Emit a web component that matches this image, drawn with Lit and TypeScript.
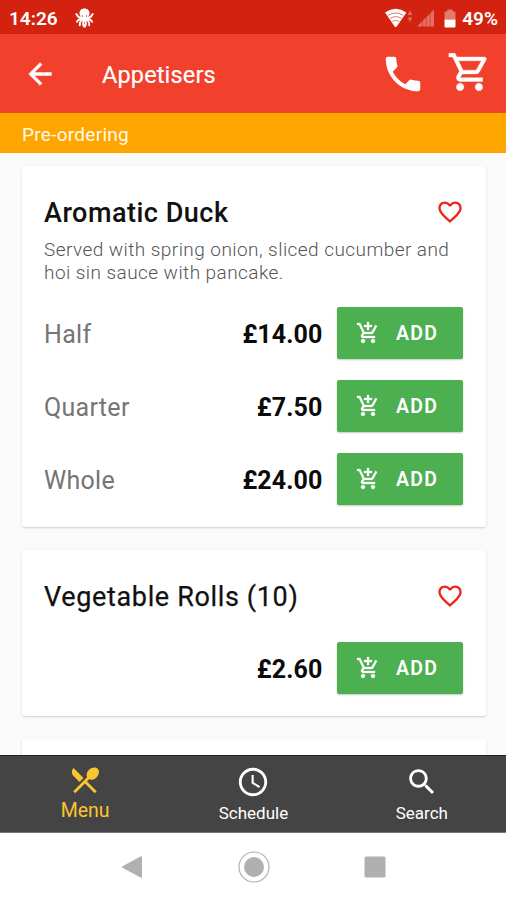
import { LitElement, html, css, svg } from "lit";
import { customElement, property } from "lit/decorators.js";

const paths: Record<string, string> = {
  back: "M20 11H7.83l5.59-5.59L12 4l-8 8 8 8 1.41-1.41L7.83 13H20v-2z",
  phone:
    "M6.62 10.79c1.44 2.83 3.76 5.14 6.59 6.59l2.2-2.2c.27-.27.67-.36 1.02-.24 1.12.37 2.33.57 3.57.57.55 0 1 .45 1 1V20c0 .55-.45 1-1 1-9.39 0-17-7.61-17-17 0-.55.45-1 1-1h3.5c.55 0 1 .45 1 1 0 1.25.2 2.45.57 3.57.11.35.03.74-.25 1.02l-2.2 2.2z",
  cart: "M15.55 13c.75 0 1.41-.41 1.75-1.03l3.58-6.49c.37-.66-.11-1.48-.87-1.48H5.21l-.94-2H1v2h2l3.6 7.59-1.35 2.44C4.52 15.37 5.48 17 7 17h12v-2H7l1.1-2h7.45zM6.16 6h12.15l-2.76 5H8.53L6.16 6zM7 18c-1.1 0-1.99.9-1.99 2S5.9 22 7 22s2-.9 2-2-.9-2-2-2zm10 0c-1.1 0-1.99.9-1.99 2s.89 2 1.99 2 2-.9 2-2-.9-2-2-2z",
  addCart:
    "M11 9h2V6h3V4h-3V1h-2v3H8v2h3v3zm-4 9c-1.1 0-1.99.9-1.99 2S5.9 22 7 22s2-.9 2-2-.9-2-2-2zm10 0c-1.1 0-1.99.9-1.99 2s.89 2 1.99 2 2-.9 2-2-.9-2-2-2zm-9.83-3.25l.03-.12.9-1.63h7.45c.75 0 1.41-.41 1.75-1.03l3.86-7.01L19.42 4h-.01l-1.1 2-2.76 5H8.53l-.13-.27L6.16 6l-.95-2-.94-2H1v2h2l3.6 7.59-1.35 2.45c-.16.28-.25.61-.25.96 0 1.1.9 2 2 2h12v-2H7.42c-.13 0-.25-.11-.25-.25z",
  heart:
    "M16.5 3c-1.74 0-3.41.81-4.5 2.09C10.91 3.81 9.24 3 7.5 3 4.42 3 2 5.42 2 8.5c0 3.78 3.4 6.86 8.55 11.54L12 21.35l1.45-1.32C18.6 15.36 22 12.28 22 8.5 22 5.42 19.58 3 16.5 3zm-4.4 15.55l-.1.1-.1-.1C7.14 14.24 4 11.39 4 8.5 4 6.5 5.5 5 7.5 5c1.54 0 3.04.99 3.57 2.36h1.87C13.46 5.99 14.96 5 16.5 5c2 0 3.5 1.5 3.5 3.5 0 2.89-3.14 5.74-7.9 10.05z",
  menu: "M8.1 13.34l2.83-2.83L3.91 3.5c-1.56 1.56-1.56 4.09 0 5.66l4.19 4.18zm6.78-1.81c1.53.71 3.68.21 5.27-1.38 1.91-1.91 2.28-4.65.81-6.12-1.46-1.46-4.2-1.1-6.12.81-1.59 1.59-2.09 3.74-1.38 5.27L3.7 19.87l1.41 1.41L12 14.41l6.88 6.88 1.41-1.41L13.41 13l1.47-1.47z",
  schedule:
    "M11.99 2C6.47 2 2 6.48 2 12s4.47 10 9.99 10C17.52 22 22 17.52 22 12S17.52 2 11.99 2zM12 20c-4.42 0-8-3.58-8-8s3.58-8 8-8 8 3.58 8 8-3.58 8-8 8zm.5-13H11v6l5.25 3.15.75-1.23-4.5-2.67z",
  search:
    "M15.5 14h-.79l-.28-.27C15.41 12.59 16 11.11 16 9.5 16 5.91 13.09 3 9.5 3S3 5.91 3 9.5 5.91 16 9.5 16c1.61 0 3.09-.59 4.23-1.57l.27.28v.79l5 4.99L20.49 19l-4.99-5zm-6 0C7.01 14 5 11.99 5 9.5S7.01 5 9.5 5 14 7.01 14 9.5 11.99 14 9.5 14z",
};

@customElement("md-icon")
export class MdIcon extends LitElement {
  @property() name = "";
  static styles = css`
    :host { display: block; flex: none; width: 24px; height: 24px; }
    svg { display: block; width: 100%; height: 100%; fill: currentColor; stroke: currentColor; stroke-width: var(--icon-weight, 0); }
  `;
  render() {
    return html`<svg viewBox="0 0 24 24">${svg`<path d=${paths[this.name] ?? ""}></path>`}</svg>`;
  }
}

interface Option { label: string; price: string; }
interface Dish { name: string; description?: string; options: Option[]; medium?: boolean; }

@customElement("dish-card")
export class DishCard extends LitElement {
  @property({ attribute: false }) dish!: Dish;
  static styles = css`
    :host {
      display: block; box-sizing: border-box; flex: none;
      background: #fff; border-radius: 3px;
      box-shadow: 0 1px 2px rgba(0, 0, 0, 0.17);
      padding: 28px 23px 22px 22px;
    }
    .head { display: flex; justify-content: space-between; height: 36px; align-items: center; }
    .title { font-size: 27px; font-weight: 400; letter-spacing: 0.65px; color: #111; white-space: nowrap; padding-top: 2px; -webkit-text-stroke: 0.25px #111; }
    .title.medium { font-weight: 500; letter-spacing: 0.5px; -webkit-text-stroke: 0; }
    .heart { width: 28px; height: 28px; color: #ee2416; margin-right: -1px; }
    .desc { margin: 8px 0 0; height: 46px; font-size: 19px; line-height: 23px; font-weight: 300; letter-spacing: 0.44px; color: #555; white-space: pre; }
    .rows { display: flex; flex-direction: column; gap: 21px; margin-top: 23px; }
    .rows.only { margin-top: 28px; }
    .row { display: flex; align-items: center; height: 52px; }
    .label { flex: 1; font-size: 25px; letter-spacing: 0.3px; color: #757575; padding-top: 3px; }
    .price { font-size: 25px; font-weight: 700; letter-spacing: 0.1px; color: #0b0b0b; padding-top: 3px; margin-right: 14.5px; }
    .add {
      display: flex; align-items: center; box-sizing: border-box; width: 126px; height: 52px; padding: 0 0 0 19px;
      border: 0; border-radius: 2px; background: #4caf50; color: #fff;
      box-shadow: 0 1px 2px rgba(0, 0, 0, 0.22);
      font: 600 19.5px Roboto, sans-serif; letter-spacing: 1.3px;
    }
    .add md-icon { margin: -1px 16px 0 0; --icon-weight: 0.3; }
    .add span { padding-top: 1px; }
  `;
  render() {
    const d = this.dish;
    return html`
      <div class="head">
        <div class="title ${d.medium ? "medium" : ""}">${d.name}</div>
        <md-icon class="heart" name="heart"></md-icon>
      </div>
      ${d.description ? html`<p class="desc">${d.description}</p>` : ""}
      <div class="rows ${d.description ? "" : "only"}">
        ${d.options.map(
          (o) => html`<div class="row">
            <div class="label">${o.label}</div>
            <div class="price">${o.price}</div>
            <button class="add"><md-icon name="addCart"></md-icon><span>ADD</span></button>
          </div>`
        )}
      </div>
    `;
  }
}

const dishes: Dish[] = [
  {
    name: "Aromatic Duck",
    medium: true,
    description: "Served with spring onion, sliced cucumber and\nhoi sin sauce with pancake.",
    options: [
      { label: "Half", price: "£14.00" },
      { label: "Quarter", price: "£7.50" },
      { label: "Whole", price: "£24.00" },
    ],
  },
  { name: "Vegetable Rolls (10)", options: [{ label: "", price: "£2.60" }] },
];

@customElement("app-root")
export class AppRoot extends LitElement {
  static styles = css`
    :host { display: flex; flex-direction: column; height: 900px; overflow: hidden; background: #fafafa; font-family: Roboto, sans-serif; }
    .status { flex: none; display: flex; align-items: center; height: 34px; box-sizing: border-box; padding: 2px 8px 0 9px; background: #d32210; color: #fff; font-size: 19px; font-weight: 600; }
    .octopus { width: 19px; height: 20px; margin-left: 17px; }
    .grow { flex: 1; }
    .wifi { width: 29px; height: 20px; }
    .signal { width: 18px; height: 18px; margin-left: 3px; }
    .battery { width: 12px; height: 19px; margin: 0 6px 0 9px; }
    .bar { flex: none; display: flex; align-items: center; height: 79px; box-sizing: border-box; padding: 0 14px 0 23px; background: #f1402c; color: #fff; border-bottom: 1px solid #e8491a; }
    .back { width: 34px; height: 34px; margin-top: 1px; --icon-weight: 0.4; }
    .heading { flex: 1; margin-left: 45px; padding-top: 3px; font-size: 23.5px; letter-spacing: 0.15px; -webkit-text-stroke: 0.2px #fff; }
    .phone { width: 46px; height: 46px; margin-top: 2px; }
    .cart { width: 45px; height: 46px; margin: -2px 0 0 21px; --icon-weight: 0.2; }
    .notice { flex: none; display: flex; align-items: center; height: 40px; box-sizing: border-box; padding: 2px 22px 0; background: #ffa500; color: #fffbe9; font-size: 19px; letter-spacing: 0.28px; }
    .list { flex: 1; min-height: 0; overflow: hidden; display: flex; flex-direction: column; gap: 23px; padding: 13px 20px 0 22px; }
    .peek { flex: none; height: 40px; background: #fff; border-radius: 3px; box-shadow: 0 1px 2px rgba(0, 0, 0, 0.17); }
    .tabs { flex: none; display: grid; grid-template-columns: repeat(3, 1fr); height: 78px; box-sizing: border-box; padding-left: 1px; background: #444; border-top: 1px solid #222; border-bottom: 1px solid #777; color: #fff; }
    .tab { display: flex; flex-direction: column; align-items: center; font-size: 17px; line-height: 20px; padding-top: 9px; }
    .tab md-icon { width: 34px; height: 34px; margin-bottom: 4px; }
    .tab.active { color: #fbc530; font-size: 19.5px; padding-top: 7px; }
    .system { flex: none; display: grid; grid-template-columns: repeat(3, 121px); justify-content: center; justify-items: center; align-items: center; height: 67px; box-sizing: border-box; padding-left: 1px; background: #fff; }
    .system svg { width: 34px; height: 34px; fill: #b0b0b0; }
  `;
  render() {
    return html`
      <div class="status">
        <span>14:26</span>
        <svg class="octopus" viewBox="0 0 19 20">
          <g fill="none" stroke="#fff" stroke-width="1.900" stroke-linecap="round">
            <path d="M7.500 9.500Q3.500 10.500 1.300 6M11.500 9.500Q15.500 10.500 17.700 6"></path>
            <path d="M8 10.500Q3 11 2 13.800M11 10.500Q16 11 17 13.800"></path>
            <path d="M8 11Q4.500 13 4.800 17.200M11 11Q14.500 13 14.200 17.200"></path>
            <path d="M8.800 12Q7.300 15.500 9 18.600M10.200 12Q11.700 15.500 10 18.600"></path>
          </g>
          <path fill="#fff" d="M9.500.5C6.300.5 4.300 2.800 4.500 5.500c.1 1.800 1.300 2.800 1.700 4.300L6.500 13h6l.3-3.200c.4-1.500 1.600-2.500 1.700-4.300C14.700 2.800 12.700.5 9.500.5z"></path>
          <circle cx="7.500" cy="8" r=".7" fill="#d32210"></circle>
          <circle cx="11.500" cy="8" r=".7" fill="#d32210"></circle>
        </svg>
        <span class="grow"></span>
        <svg class="wifi" viewBox="0 0 29 20">
          <path fill="#fff" d="M0 4.500Q10.700-2.800 21.400 4.500L11.700 18.500q-1 1-2 0z"></path>
          <path d="M3 7.300Q10.700 2.800 18.400 7.300M5 10.300Q10.700 7 16.400 10.300M7.300 13.400Q10.700 11.500 14.100 13.400" fill="none" stroke="#d32210" stroke-width=".8" opacity=".75"></path>
          <path fill="#fff" opacity=".35" d="M22.800 7l2.200-4.500L27.200 7zM22.800 9.500h4.400L25 14z"></path>
        </svg>
        <svg class="signal" viewBox="0 0 18 18">
          <path fill="#fff" opacity=".35" d="M17 .5V17.500H0z"></path>
          <path d="M5.500 11v7M9.300 7v11M13.200 3v15" stroke="#d32210" stroke-width=".8" opacity=".6"></path>
        </svg>
        <svg class="battery" viewBox="0 0 12 19">
          <path fill="#fff" opacity=".4" d="M.5 3.500q0-1 1-1H3q0-2 1.500-2h3q1.500 0 1.500 2h1.500q1 0 1 1V10.500H.5z"></path>
          <path fill="#fff" d="M.5 10.500h11v7q0 1-1 1h-9q-1 0-1-1z"></path>
        </svg>
        <span>49%</span>
      </div>
      <div class="bar">
        <md-icon class="back" name="back"></md-icon>
        <div class="heading">Appetisers</div>
        <md-icon class="phone" name="phone"></md-icon>
        <md-icon class="cart" name="cart"></md-icon>
      </div>
      <div class="notice">Pre-ordering</div>
      <div class="list">
        ${dishes.map((d) => html`<dish-card .dish=${d}></dish-card>`)}
        <div class="peek"></div>
      </div>
      <div class="tabs">
        <div class="tab active"><md-icon name="menu"></md-icon>Menu</div>
        <div class="tab"><md-icon name="schedule"></md-icon>Schedule</div>
        <div class="tab"><md-icon name="search"></md-icon>Search</div>
      </div>
      <div class="system">
        <svg viewBox="0 0 34 34"><path d="M6.500 16.300L25 6.300q1-.5 1 .7v20q0 1.200-1 .7L6.500 17.700q-1.200-.7 0-1.400z"></path></svg>
        <svg viewBox="0 0 34 34"><circle cx="17" cy="17" r="10"></circle><circle cx="17" cy="17" r="15" fill="none" stroke="#b0b0b0" stroke-width="1.200"></circle></svg>
        <svg viewBox="0 0 34 34"><rect x="6.500" y="6.500" width="21" height="21" rx="1.500"></rect></svg>
      </div>
    `;
  }
}
